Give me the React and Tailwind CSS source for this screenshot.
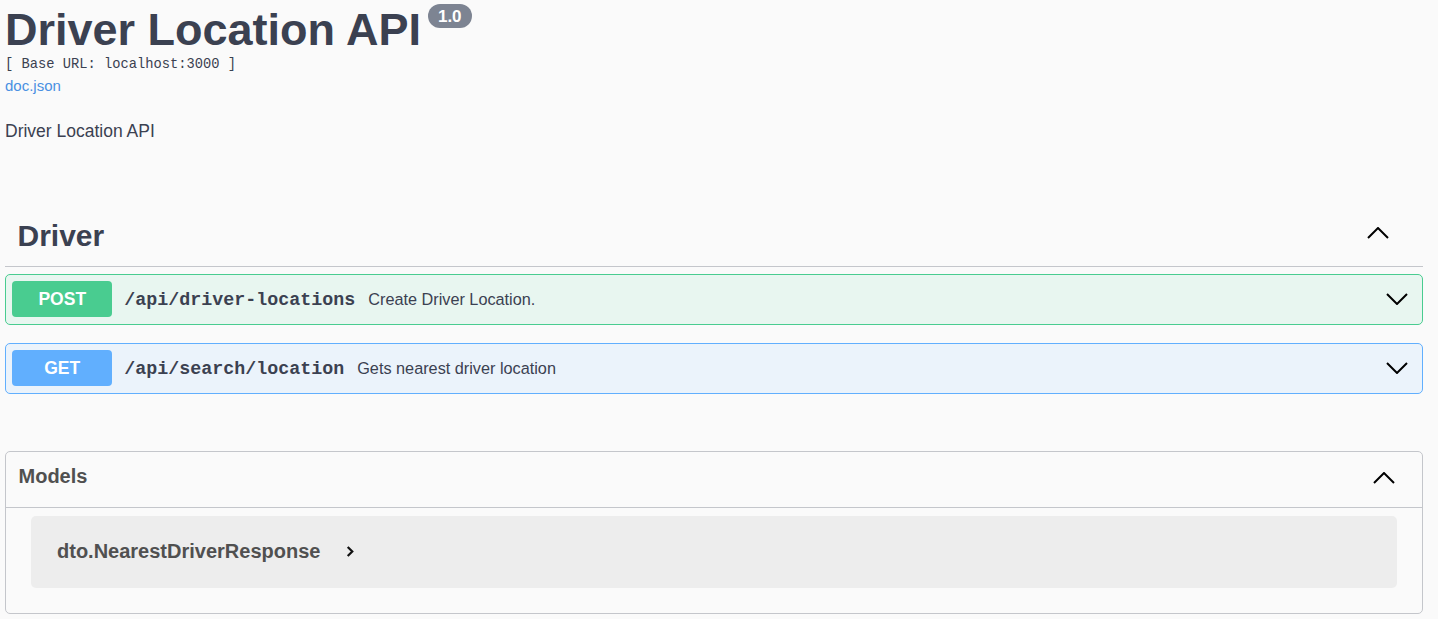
const Chevron = ({ dir = "up", className = "" }) => {
  const pts = dir === "up" ? "1,11 11,1 21,11" : "1,1 11,11 21,1";
  return (
    <svg viewBox="0 0 22 12" className={className} fill="none" stroke="#000" strokeWidth="2">
      <polyline points={pts} />
    </svg>
  );
};

const Operation = ({ method, path, summary, badge, border, bg }) => (
  <div className={`flex items-center rounded-[5px] border px-[6.25px] py-[6.5px] ${border} ${bg}`}>
    <span
      className={`flex h-[36px] w-[100px] items-center justify-center rounded-[4px] text-[17.5px] font-bold text-white ${badge}`}
    >
      {method}
    </span>
    <span className="ml-[12px] pt-[3px] font-['Liberation_Mono',monospace] text-[18.33px] font-bold text-[#3b4151]">
      {path}
    </span>
    <span className="ml-[13px] text-[16.25px] text-[#3b4151]">{summary}</span>
    <Chevron dir="down" className="ml-auto mr-[8px] h-[12px] w-[22px]" />
  </div>
);

export default function App() {
  return (
    <div className="min-h-screen bg-[#fafafa] pl-[5px] pr-[15px] font-['Liberation_Sans',Arial,sans-serif] text-[#3b4151]">
      <div className="flex flex-col">
        <h2 className="mt-[3.5px] flex items-start text-[45px] font-bold leading-[51.75px]">
          Driver Location API
          <span className="ml-[7px] mt-[0.5px] flex h-[24px] items-center rounded-full bg-[#7d8492] px-[10px] text-[17px] font-bold leading-none text-white">
            1.0
          </span>
        </h2>
        <pre className="mt-[1.5px] font-['Liberation_Mono',monospace] text-[13.75px] leading-[16px]">
          [ Base URL: localhost:3000 ]
        </pre>
        <a className="mt-[4.4px] self-start text-[15px] leading-[17.25px] text-[#4990e2]">doc.json</a>
        <p className="mt-[26.5px] text-[17.5px] leading-[20px]">Driver Location API</p>
      </div>

      <div className="mt-[65.5px]">
        <div className="flex items-center border-b border-[#c4c6cb] py-[12.5px] pl-[12.5px] pr-[34px]">
          <h3 className="text-[30px] font-bold leading-[34.5px]">Driver</h3>
          <Chevron dir="up" className="mb-[6px] ml-auto h-[12px] w-[22px]" />
        </div>
        <div className="mt-[7px] flex flex-col gap-[18px]">
          <Operation
            method="POST"
            path="/api/driver-locations"
            summary="Create Driver Location."
            badge="bg-[#49cc90]"
            border="border-[#49cc90]"
            bg="bg-[#e8f6f0]"
          />
          <Operation
            method="GET"
            path="/api/search/location"
            summary="Gets nearest driver location"
            badge="bg-[#61affe]"
            border="border-[#61affe]"
            bg="bg-[#ebf3fb]"
          />
        </div>
      </div>

      <div className="mt-[57px] rounded-[5px] border border-[#c4c6cb]">
        <div className="flex h-[56px] items-start border-b border-[#c4c6cb] pl-[12.5px] pr-[27px] pt-[13px]">
          <h4 className="text-[20px] font-bold leading-[23px] text-[#505050]">Models</h4>
          <Chevron dir="up" className="ml-auto mt-[7px] h-[12px] w-[22px]" />
        </div>
        <div className="mx-[25px] mb-[25px] mt-[8px] flex h-[72px] items-center rounded-[5px] bg-[#ededed] pl-[26px]">
          <span className="text-[20px] font-bold leading-[23px] text-[#505050]">dto.NearestDriverResponse</span>
          <svg viewBox="0 0 8 12" className="ml-[26px] h-[11px] w-[8px]" fill="none" stroke="#111" strokeWidth="2.4">
            <polyline points="1.5,1 6.5,6 1.5,11" />
          </svg>
        </div>
      </div>
    </div>
  );
}
